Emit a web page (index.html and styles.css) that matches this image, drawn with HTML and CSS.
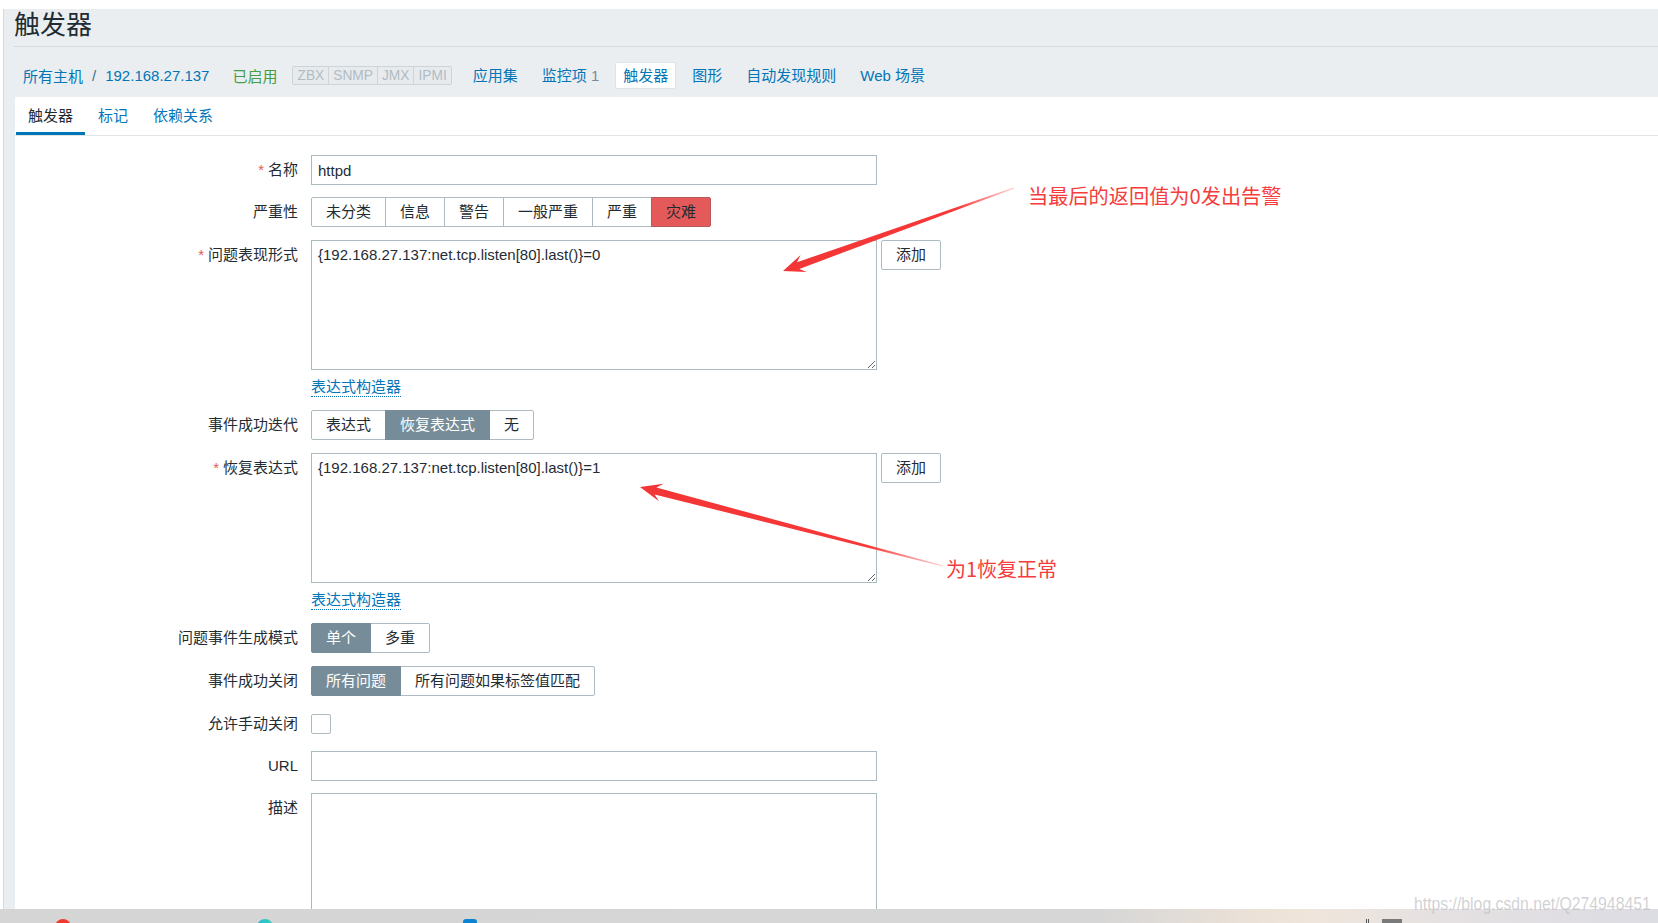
FILE: index.html
```html
<!DOCTYPE html>
<html lang="zh-CN">
<head>
<meta charset="utf-8">
<title>触发器</title>
<link rel="stylesheet" href="styles.css">
</head>
<body>
<div class="screen">
  <div class="browser-top"></div>
  <div class="page">
    <header class="page-header">
      <h1 class="title">触发器</h1>
    </header>
    <nav class="host-nav">
      <a class="link">所有主机</a><span class="sep">/</span><a class="link">192.168.27.137</a>
      <span class="status-on">已启用</span>
      <span class="avail"><span>ZBX</span><span>SNMP</span><span>JMX</span><span>IPMI</span></span>
      <ul class="nav-links">
        <li><a>应用集</a></li>
        <li><a>监控项 <span class="count">1</span></a></li>
        <li class="selected"><a>触发器</a></li>
        <li><a>图形</a></li>
        <li><a>自动发现规则</a></li>
        <li><a>Web 场景</a></li>
      </ul>
    </nav>
    <section class="panel">
      <div class="tabs">
        <a class="tab active">触发器</a>
        <a class="tab">标记</a>
        <a class="tab">依赖关系</a>
      </div>
      <form class="form">
        <div class="row gap12">
          <label class="label req">名称</label>
          <div class="field"><input class="text-input" type="text" value="httpd"></div>
        </div>
        <div class="row">
          <label class="label">严重性</label>
          <div class="field">
            <div class="seg">
              <span class="opt">未分类</span><span class="opt">信息</span><span class="opt">警告</span><span class="opt">一般严重</span><span class="opt">严重</span><span class="opt disaster">灾难</span>
            </div>
          </div>
        </div>
        <div class="row">
          <label class="label req">问题表现形式</label>
          <div class="field col">
            <div class="expr-wrap">
              <textarea class="textarea">{192.168.27.137:net.tcp.listen[80].last()}=0</textarea>
              <button class="btn" type="button">添加</button>
            </div>
            <a class="builder-link">表达式构造器</a>
          </div>
        </div>
        <div class="row">
          <label class="label">事件成功迭代</label>
          <div class="field">
            <div class="seg">
              <span class="opt">表达式</span><span class="opt on">恢复表达式</span><span class="opt">无</span>
            </div>
          </div>
        </div>
        <div class="row">
          <label class="label req">恢复表达式</label>
          <div class="field col">
            <div class="expr-wrap">
              <textarea class="textarea">{192.168.27.137:net.tcp.listen[80].last()}=1</textarea>
              <button class="btn" type="button">添加</button>
            </div>
            <a class="builder-link">表达式构造器</a>
          </div>
        </div>
        <div class="row">
          <label class="label">问题事件生成模式</label>
          <div class="field">
            <div class="seg">
              <span class="opt on">单个</span><span class="opt">多重</span>
            </div>
          </div>
        </div>
        <div class="row">
          <label class="label">事件成功关闭</label>
          <div class="field">
            <div class="seg">
              <span class="opt on">所有问题</span><span class="opt">所有问题如果标签值匹配</span>
            </div>
          </div>
        </div>
        <div class="row gap12">
          <label class="label">允许手动关闭</label>
          <div class="field"><span class="checkbox"></span></div>
        </div>
        <div class="row gap12">
          <label class="label">URL</label>
          <div class="field"><input class="text-input" type="text" value=""></div>
        </div>
        <div class="row">
          <label class="label">描述</label>
          <div class="field"><textarea class="textarea tall"></textarea></div>
        </div>
      </form>
    </section>
  </div>
  <div class="taskbar">
    <span class="tb-icon red"></span>
    <span class="tb-icon teal"></span>
    <span class="tb-icon blue"></span>
    <span class="tb-bar"></span>
    <span class="tb-mark"></span>
  </div>

  <svg class="annot" width="1658" height="923" viewBox="0 0 1658 923">
    <defs>
      <linearGradient id="g1" gradientUnits="userSpaceOnUse" x1="1014" y1="188" x2="783" y2="271">
        <stop offset="0" stop-color="#ff3b3b" stop-opacity="0.25"/>
        <stop offset="0.25" stop-color="#f83838" stop-opacity="1"/>
        <stop offset="1" stop-color="#f23535" stop-opacity="1"/>
      </linearGradient>
      <linearGradient id="g2" gradientUnits="userSpaceOnUse" x1="943" y1="566" x2="640" y2="487">
        <stop offset="0" stop-color="#ff3b3b" stop-opacity="0.25"/>
        <stop offset="0.25" stop-color="#f83838" stop-opacity="1"/>
        <stop offset="1" stop-color="#f23535" stop-opacity="1"/>
      </linearGradient>
    </defs>
    <polygon fill="url(#g1)" points="1014.2,188.6 799.3,268.9 806.8,272.0 783,271 800.6,255.0 796.9,262.3 1013.8,187.4"/>
    <polygon fill="url(#g2)" points="943.15,565.4 656.4,487.6 663.6,483.8 640,487 659.0,501.2 654.6,494.4 942.85,566.6"/>
  </svg>
  <div class="note note1">当最后的返回值为0发出告警</div>
  <div class="note note2">为1恢复正常</div>
  <div class="watermark">https://blog.csdn.net/Q274948451</div>
</div>
</body>
</html>
```

FILE: styles.css
```css
* { box-sizing: border-box; }

html, body {
  margin: 0;
  padding: 0;
}

body {
  width: 1658px;
  height: 923px;
  overflow: hidden;
  background: #ffffff;
  font-family: "Liberation Sans", Arial, "Noto Sans CJK SC", sans-serif;
  font-size: 15px;
  color: #1f2c33;
}

.screen {
  position: relative;
  width: 1658px;
  height: 923px;
  overflow: hidden;
  display: flex;
  flex-direction: column;
}

.browser-top {
  flex: none;
  height: 9px;
  background: #ffffff;
}

.page {
  flex: 1;
  min-height: 0;
  margin-left: 3px;
  border-left: 1px solid #d6dadd;
  background: #ebeef0;
  display: flex;
  flex-direction: column;
  overflow: hidden;
}

.page-header {
  flex: none;
  height: 38px;
  margin-left: 10px;
  border-bottom: 1px solid #d5dadd;
}

.title {
  margin: 0;
  font-size: 26px;
  font-weight: normal;
  line-height: 33px;
  color: #1f2c33;
}

.host-nav {
  flex: none;
  height: 50px;
  padding: 7px 0 0 19px;
  display: flex;
  align-items: center;
  white-space: nowrap;
}

.link { color: #0275b8; }

.sep {
  margin: 0 9px;
  color: #3c6f93;
}

.status-on {
  margin-left: 23px;
  color: #429e47;
}

.avail {
  margin-left: 15px;
  display: inline-flex;
  height: 19px;
  border: 1px solid #cdd4d8;
  border-radius: 2px;
  background: #e8ebee;
  font-size: 13.75px;
  line-height: 17px;
  color: #b0bcc3;
}

.avail span {
  padding: 0 4px;
  border-left: 1px solid #cdd4d8;
}

.avail span:first-child { border-left: 0; }

.nav-links {
  list-style: none;
  margin: 0 0 0 13px;
  padding: 0;
  display: flex;
  gap: 8px;
}

.nav-links a {
  display: block;
  padding: 4px 7px;
  line-height: 17px;
  border: 1px solid transparent;
  border-radius: 2px;
  color: #0275b8;
}

.nav-links .selected a {
  background: #ffffff;
  border-color: #dde3e6;
}

.count { color: #768d99; }

.panel {
  flex: 1;
  min-height: 0;
  margin-left: 11px;
  background: #ffffff;
  overflow: hidden;
}

.tabs {
  display: flex;
  height: 39px;
  padding-left: 1px;
  border-bottom: 1px solid #dfe4e7;
}

.tab {
  display: block;
  height: 38px;
  padding: 2px 12px 0;
  line-height: 33px;
  border-bottom: 3px solid transparent;
  color: #0275b8;
}

.tab + .tab { margin-left: 1px; }

.tab.active {
  color: #1f2c33;
  border-bottom-color: #0275b8;
}

.form {
  padding-top: 19px;
}

.row {
  display: grid;
  grid-template-columns: 283px 1fr;
  column-gap: 13px;
  margin-bottom: 13px;
}

.row.gap12 { margin-bottom: 12px; }

.label {
  text-align: right;
  line-height: 30px;
  white-space: nowrap;
  color: #1f2c33;
}

.label.req::before {
  content: "*";
  color: #e45959;
  margin-right: 4px;
}

.field {
  display: flex;
  align-items: flex-start;
}

.field.col {
  flex-direction: column;
}

.text-input {
  width: 566px;
  height: 30px;
  margin: 0;
  padding: 0 6px;
  border: 1px solid #acbbc2;
  border-radius: 0;
  background: #ffffff;
  font: inherit;
  color: #1f2c33;
  outline: none;
}

.expr-wrap {
  display: flex;
  align-items: flex-start;
  gap: 4px;
}

.textarea {
  display: block;
  width: 566px;
  height: 130px;
  margin: 0;
  padding: 4px 6px;
  border: 1px solid #acbbc2;
  border-radius: 0;
  background: #ffffff;
  font: inherit;
  line-height: 20px;
  color: #1f2c33;
  overflow: hidden;
  outline: none;
}

.textarea.tall { height: 200px; }

.btn {
  height: 30px;
  margin: 0;
  padding: 0 14px;
  border: 1px solid #acbbc2;
  border-radius: 2px;
  background: #ffffff;
  font: inherit;
  line-height: 28px;
  color: #1f2c33;
}

.builder-link {
  display: inline-block;
  margin-top: 8px;
  line-height: 18px;
  color: #0275b8;
  border-bottom: 1px dotted #0275b8;
}

.seg {
  display: flex;
}

.seg .opt {
  position: relative;
  height: 30px;
  padding: 0 14px;
  margin-left: -1px;
  line-height: 28px;
  border: 1px solid #acbbc2;
  background: #ffffff;
  color: #1f2c33;
  white-space: nowrap;
}

.seg .opt:first-child {
  margin-left: 0;
  border-radius: 2px 0 0 2px;
}

.seg .opt:last-child {
  border-radius: 0 2px 2px 0;
}

.seg .opt.on {
  z-index: 1;
  background: #768d99;
  border-color: #768d99;
  color: #ffffff;
}

.seg .opt.disaster {
  z-index: 1;
  background: #e45959;
  border-color: #b8595b;
  color: #1f2c33;
}

.checkbox {
  display: block;
  width: 20px;
  height: 20px;
  margin-top: 5px;
  border: 1px solid #acbbc2;
  border-radius: 2px;
  background: #ffffff;
}

.taskbar {
  flex: none;
  height: 14px;
  display: flex;
  align-items: flex-start;
  padding-top: 10px;
  overflow: hidden;
  background: linear-gradient(90deg, #d5d5d5 0%, #d6d6d6 66%, #ece2d7 76%, #efe5db 79%, #e5e1e2 87%, #dcdce3 100%);
}

.tb-icon {
  flex: none;
  display: block;
  width: 16px;
  height: 16px;
}

.tb-icon.red {
  margin-left: 55px;
  border-radius: 50%;
  background: #f03a2e;
}

.tb-icon.teal {
  margin-left: 186px;
  border-radius: 50%;
  background: linear-gradient(90deg, #2ab7d6, #34d2c0);
}

.tb-icon.blue {
  margin-left: 190px;
  width: 14px;
  border-radius: 3px;
  background: #0a84d0;
}

.tb-bar {
  flex: none;
  display: block;
  width: 3px;
  height: 6px;
  margin-left: 889px;
  border-left: 1px solid #555;
  border-right: 1px solid #555;
}

.tb-mark {
  flex: none;
  display: block;
  width: 20px;
  height: 6px;
  margin-left: 13px;
  background: #7a7a7a;
}

.annot {
  position: absolute;
  left: 0;
  top: 0;
  pointer-events: none;
}

.note {
  position: absolute;
  font-family: "Noto Sans CJK SC", "Liberation Sans", sans-serif;
  line-height: 28px;
  color: #f53d3d;
  white-space: nowrap;
}

.note1 {
  left: 1028px;
  top: 182px;
  font-size: 20.2px;
}

.note2 {
  left: 946px;
  top: 555px;
  font-size: 20px;
}

.watermark {
  position: absolute;
  left: 1414px;
  top: 893px;
  font-family: "Liberation Sans", Arial, sans-serif;
  font-size: 19px;
  line-height: 22px;
  color: rgba(190, 190, 195, 0.7);
  transform: scaleX(0.83);
  transform-origin: left top;
  white-space: nowrap;
}
```
